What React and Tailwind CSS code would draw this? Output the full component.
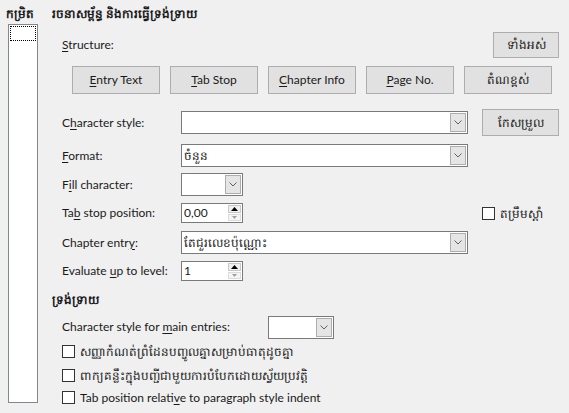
import React from "react";

const font = { fontFamily: "Lato, 'Noto Sans', 'Liberation Sans', sans-serif" };

function U({ children }) {
  return <span className="underline underline-offset-2">{children}</span>;
}

function Combo({ w, value }) {
  return (
    <div className={`flex h-[23px] border border-[#7a7a7a] bg-white ${w}`}>
      <div className="flex-1 truncate pl-[2px] leading-[21px]">{value}</div>
      <div className="m-px flex w-[16px] items-center justify-center border border-[#adadad] bg-[#e5e5e5]">
        <svg width="8" height="5" viewBox="0 0 8 5">
          <path d="M0.5 0.5 L4 4 L7.5 0.5" fill="none" stroke="#606060" strokeWidth="1" />
        </svg>
      </div>
    </div>
  );
}

function Spin({ value }) {
  return (
    <div className="flex h-[20px] w-[62px] border border-[#7a7a7a] bg-white">
      <div className="flex-1 pl-[2px] leading-[18px]">{value}</div>
      <div className="flex w-[15px] flex-col gap-px p-px">
        <div className="flex flex-1 items-center justify-center border border-[#c8c8c8] bg-[#f0f0f0]">
          <svg width="7" height="4" viewBox="0 0 7 4">
            <path d="M0 4 L3.5 0 L7 4 Z" fill="#000" />
          </svg>
        </div>
        <div className="flex flex-1 items-center justify-center border border-[#dcdcdc] bg-[#f5f5f5]">
          <svg width="5" height="3" viewBox="0 0 5 3">
            <path d="M0 0 L2.5 3 L5 0 Z" fill="#a0a0a0" />
          </svg>
        </div>
      </div>
    </div>
  );
}

function Btn({ className, children }) {
  return (
    <div className={`flex items-center justify-center border border-[#adadad] bg-[#e1e1e1] ${className}`}>
      {children}
    </div>
  );
}

function Check({ className = "", children }) {
  return (
    <div className={`flex h-[13px] items-center gap-[5px] ${className}`}>
      <div className="h-[13px] w-[13px] shrink-0 border border-[#333] bg-white" />
      <span className="whitespace-nowrap leading-[13px]">{children}</span>
    </div>
  );
}

export default function App() {
  return (
    <div className="flex h-[413px] w-[569px] overflow-hidden bg-[#f0f0f0] text-[12px] text-[#1a1a1a]" style={font}>
      <div className="flex w-[46px] flex-col pl-[6px]">
        <div className="mt-[6px] h-[16px] font-bold leading-[16px]">កម្រិត</div>
        <div className="ml-[2px] mt-[2px] h-[379px] w-[30px] border border-[#828790] bg-white p-px">
          <div className="h-[15px] border border-dotted border-[#000]" />
        </div>
      </div>

      <div className="flex flex-1 flex-col pl-[6px]">
        <div className="mt-[6px] h-[16px] font-bold leading-[16px]">រចនាសម្ព័ន្ធ និងការធ្វើទ្រង់ទ្រាយ</div>

        <div className="ml-[10px] mr-[10px] mt-[10px] flex h-[26px] items-center justify-between">
          <span>
            <U>S</U>tructure:
          </span>
          <Btn className="h-[26px] w-[66px]">ទាំងអស់</Btn>
        </div>

        <div className="ml-[20px] mt-[8px] flex gap-[10px]">
          <Btn className="h-[28px] w-[88px]">
            <span><U>E</U>ntry Text</span>
          </Btn>
          <Btn className="h-[28px] w-[88px]">
            <span><U>T</U>ab Stop</span>
          </Btn>
          <Btn className="h-[28px] w-[88px]">
            <span><U>C</U>hapter Info</span>
          </Btn>
          <Btn className="h-[28px] w-[88px]">
            <span><U>P</U>age No.</span>
          </Btn>
          <Btn className="h-[28px] w-[88px]">តំណខ្ពស់</Btn>
        </div>

        <div className="ml-[10px] mt-[15px] flex h-[27px] items-center">
          <span className="w-[119px]">
            C<U>h</U>aracter style:
          </span>
          <Combo w="w-[287px]" value="" />
          <Btn className="ml-[14px] h-[27px] w-[77px]">កែសម្រួល</Btn>
        </div>

        <div className="ml-[10px] mt-[8px] flex h-[23px] items-center">
          <span className="w-[119px]">
            <U>F</U>ormat:
          </span>
          <Combo w="w-[287px]" value="ចំនួន" />
        </div>

        <div className="ml-[10px] mt-[6px] flex h-[23px] items-center">
          <span className="w-[119px]">
            F<U>i</U>ll character:
          </span>
          <Combo w="w-[62px]" value="" />
        </div>

        <div className="ml-[10px] mt-[7px] flex h-[20px] items-center">
          <span className="w-[119px]">
            Ta<U>b</U> stop position:
          </span>
          <Spin value="0,00" />
          <div className="ml-[239px]">
            <Check>តម្រឹមស្ដាំ</Check>
          </div>
        </div>

        <div className="ml-[10px] mt-[8px] flex h-[23px] items-center">
          <span className="w-[119px]">
            Chapter entr<U>y</U>:
          </span>
          <Combo w="w-[287px]" value="តែជួរលេខប៉ុណ្ណោះ" />
        </div>

        <div className="ml-[10px] mt-[7px] flex h-[20px] items-center">
          <span className="w-[119px]">
            Evaluate <U>u</U>p to level:
          </span>
          <Spin value="1" />
        </div>

        <div className="mt-[11px] h-[16px] font-bold leading-[16px]">ទ្រង់ទ្រាយ</div>

        <div className="ml-[10px] mt-[8px] flex h-[22px] items-center">
          <span className="w-[206px]">
            Character style for <U>m</U>ain entries:
          </span>
          <Combo w="w-[66px]" value="" />
        </div>

        <div className="ml-[10px] flex flex-col">
          <Check className="mt-[7px]">សញ្ញាកំណត់ព្រំដែនបញ្ចូលគ្នាសម្រាប់ធាតុដូចគ្នា</Check>
          <Check className="mt-[11px]">ពាក្យគន្លឹះក្នុងបញ្ជីជាមួយការបំបែកដោយស្វ័យប្រវត្តិ</Check>
          <Check className="mt-[9px]">
            <span>
              Tab position relati<U>v</U>e to paragraph style indent
            </span>
          </Check>
        </div>
      </div>
    </div>
  );
}
